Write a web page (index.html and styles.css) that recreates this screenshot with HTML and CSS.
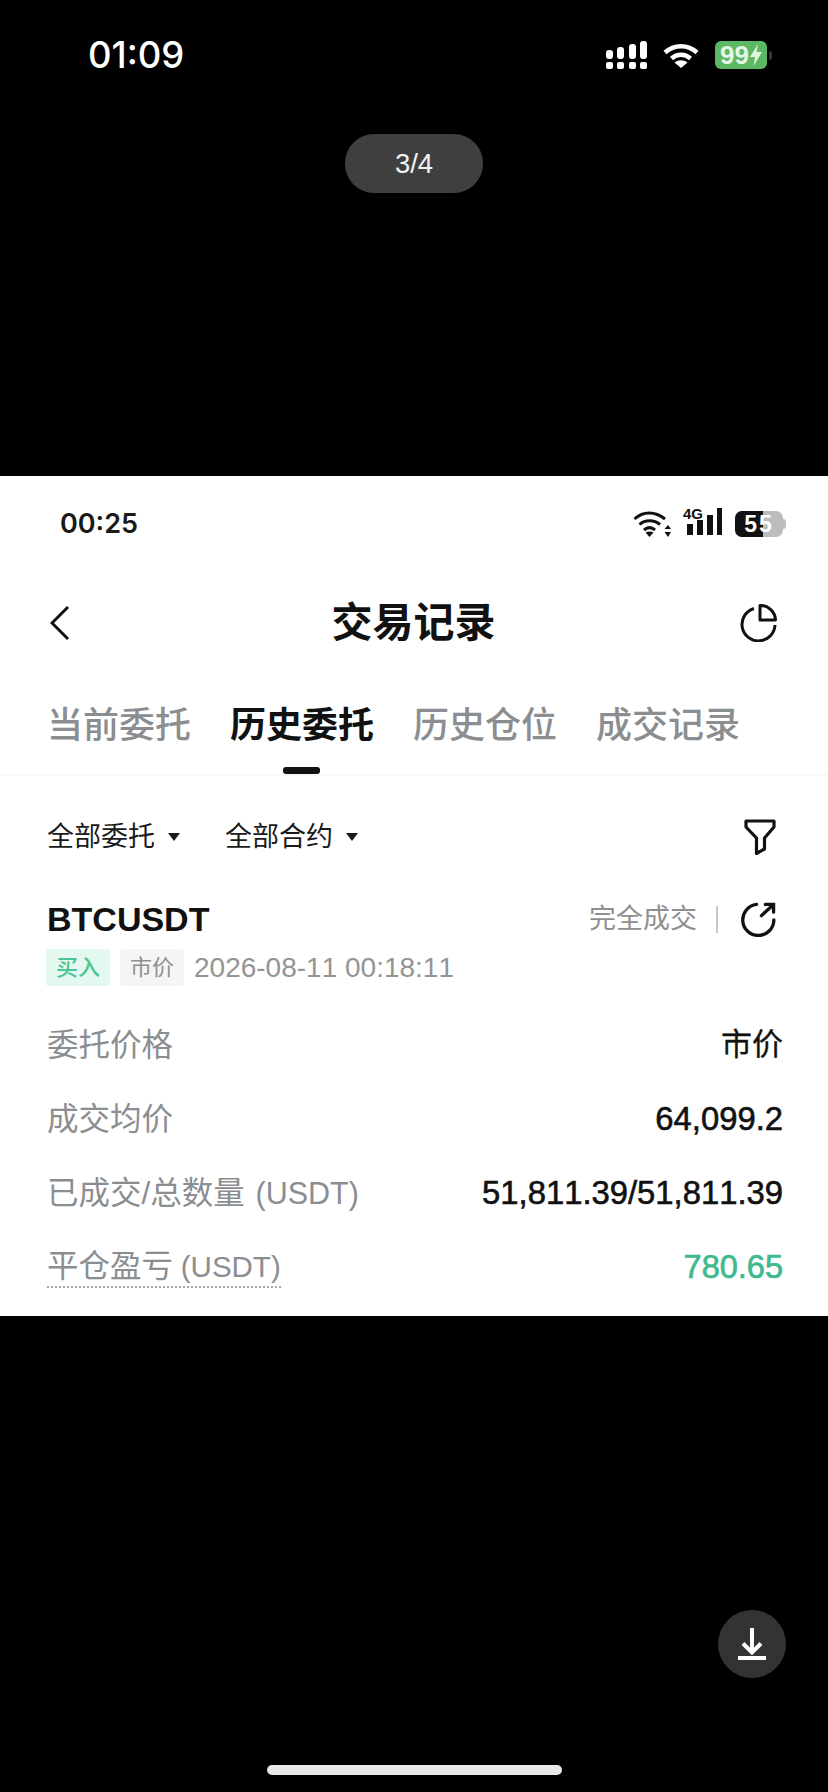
FILE: index.html
```html
<!DOCTYPE html>
<html lang="zh-CN">
<head>
<meta charset="utf-8">
<title>交易记录</title>
<link rel="stylesheet" href="styles.css">
</head>
<body>
<div class="viewer">
  <header class="os-status">
    <span class="os-time">01:09</span>
    <div class="os-icons">
      <svg class="os-signal" viewBox="0 0 41 28" width="41" height="28"><g fill="#fff"><rect x="0" y="9" width="7" height="9" rx="3"/><rect x="11" y="6" width="7" height="12" rx="3"/><rect x="23" y="3" width="7" height="15" rx="3"/><rect x="34" y="0" width="7" height="18" rx="3"/><rect x="0" y="21" width="7" height="7" rx="2"/><rect x="11" y="21" width="7" height="7" rx="2"/><rect x="23" y="21" width="7" height="7" rx="2"/><rect x="34" y="21" width="7" height="7" rx="2"/></g></svg>
      <svg class="os-wifi" viewBox="0 0 36 26" width="36" height="26"><g fill="none" stroke="#fff" stroke-width="4.5"><path d="M2 10.5C11 2 25 2 34 10.5"/><path d="M8.5 16.5C14 11.5 22 11.5 27.5 16.5"/></g><path d="M11.5 20.5C15.5 17.5 20.5 17.5 24.5 20.5L18 26Z" fill="#fff"/></svg>
      <div class="os-battery"><span class="os-battery-text">99</span><svg viewBox="0 0 12 22" width="12" height="22"><path d="M8 0L0 13H5L3.500 22L12 8H6.500Z" fill="#dff3df"/></svg></div>
      <span class="os-battery-cap"></span>
    </div>
  </header>
  <div class="pager">3/4</div>

  <main class="shot">
    <div class="app-status">
      <span class="app-time">00:25</span>
      <div class="app-icons">
        <svg viewBox="0 0 38 27" width="38" height="27"><g fill="none" stroke="#111" stroke-width="3"><path d="M1.500 9C10 1 22 1 32 9"/><path d="M6.500 14.500C12 9.500 21 9.500 27 14.500"/><path d="M11 20C14.500 17 18.500 17 22 20"/></g><path d="M12.500 22.500C15 21 18 21 20.500 22.500L16.500 27Z" fill="#111"/><path d="M35 15L38 19H31.500ZM35 27L31.500 22H38Z" fill="#111"/></svg>
        <div class="app-net"><span class="app-4g">4G</span><svg viewBox="0 0 38 27" width="38" height="27"><g fill="#111"><rect x="3" y="16" width="6" height="11"/><rect x="13" y="12" width="6" height="15"/><rect x="23" y="7" width="6" height="20"/><rect x="33" y="0" width="5" height="27"/></g></svg></div>
        <div class="app-battery"><div class="app-battery-body"><span class="app-battery-fill"></span><span class="app-battery-text">55</span></div><span class="app-battery-cap"></span></div>
      </div>
    </div>

    <nav class="topbar">
      <svg class="back" viewBox="0 0 20 36" width="20" height="36"><path d="M18 2L2 18L18 34" fill="none" stroke="#111" stroke-width="3"/></svg>
      <h1 class="title">交易记录</h1>
      <svg class="pie" viewBox="0 0 37 38" width="37" height="38"><g fill="none" stroke="#111" stroke-width="3" stroke-linejoin="round"><path d="M14 4.500A16.500 16.500 0 1 0 35 21"/><path d="M20 1.500A15 15 0 0 1 35.500 16H20Z"/></g></svg>
    </nav>

    <div class="tabs">
      <span class="tab">当前委托</span>
      <span class="tab tab-active">历史委托</span>
      <span class="tab">历史仓位</span>
      <span class="tab">成交记录</span>
    </div>

    <div class="filters">
      <span class="filter">全部委托<i class="caret"></i></span>
      <span class="filter">全部合约<i class="caret"></i></span>
      <svg class="funnel" viewBox="0 0 32 36" width="32" height="36"><path d="M2 2H30V8L20.500 19V30L12.500 34.500V19L2 8Z" fill="none" stroke="#111" stroke-width="3.200" stroke-linejoin="round"/></svg>
    </div>

    <section class="order">
      <div class="order-head">
        <span class="symbol">BTCUSDT</span>
        <div class="order-state">
          <span class="state-text">完全成交</span>
          <span class="state-sep"></span>
          <svg viewBox="0 0 36 36" width="35" height="35"><g fill="none" stroke="#111" stroke-width="3.400" stroke-linecap="round"><path d="M16 2.500A16 16 0 1 0 33.800 18.500"/><path d="M21 14L33 3"/><path d="M25 2.500H33.500V10.500"/></g></svg>
        </div>
      </div>
      <div class="order-meta">
        <span class="tag tag-buy">买入</span>
        <span class="tag tag-market">市价</span>
        <span class="stamp">2026-08-11 00:18:11</span>
      </div>
      <dl class="rows">
        <div class="row"><dt>委托价格</dt><dd class="value-cjk">市价</dd></div>
        <div class="row"><dt>成交均价</dt><dd>64,099.2</dd></div>
        <div class="row"><dt>已成交/总数量 <span class="unit">(USDT)</span></dt><dd>51,811.39/51,811.39</dd></div>
        <div class="row"><dt class="dotted">平仓盈亏 <span class="unit unit-tight">(USDT)</span></dt><dd class="profit">780.65</dd></div>
      </dl>
    </section>
  </main>

  <button class="save" type="button" aria-label="下载">
    <svg viewBox="0 0 28 32" width="28" height="32"><g fill="none" stroke="#fff" stroke-width="4"><path d="M14 0V24"/><path d="M5 15.500L14 24.500L23 15.500"/><path d="M0 30H28"/></g></svg>
  </button>
  <div class="home"></div>
</div>
</body>
</html>
```
FILE: styles.css
```css
* { box-sizing: border-box; margin: 0; padding: 0; }
html, body { height: 100%; background: #000; }
body { font-family: "Liberation Sans", "Noto Sans CJK SC", sans-serif; font-kerning: none; }
.viewer { display: flex; flex-direction: column; height: 1792px; overflow: hidden; }

.os-status { display: flex; justify-content: space-between; align-items: center; height: 28px; margin-top: 41px; padding: 0 56px 0 88px; }
.os-time { color: #fff; font: 500 36.500px/28px "Inter", "Liberation Sans", sans-serif; }
.os-icons { display: flex; align-items: center; }
.os-wifi { margin-left: 16px; }
.os-battery { display: flex; align-items: center; justify-content: center; gap: 1px; width: 52px; height: 28px; margin-left: 16px; background: #5cb862; border-radius: 6px; }
.os-battery-text { color: #e6f5e6; font: 700 26px/28px "Liberation Sans", sans-serif; }
.os-battery-cap { width: 3px; height: 9px; margin-left: 2px; background: #333; border-radius: 0 3px 3px 0; }

.pager { align-self: center; width: 138px; height: 59px; margin-top: 65px; background: #3f3f3f; border-radius: 29px; color: #f2f2f2; font: 400 27.500px/59px "Liberation Sans", sans-serif; text-align: center; }

.shot { height: 840px; margin-top: 283px; background: #fff; }

.app-status { display: flex; justify-content: space-between; align-items: center; height: 27px; margin-top: 34px; padding: 0 42px 0 60px; }
.app-time { color: #1a1a1a; font: 600 27px/27px "Inter", "Liberation Sans", sans-serif; }
.app-icons { display: flex; align-items: center; gap: 13px; }
.app-net { position: relative; }
.app-4g { position: absolute; left: -1px; top: -2px; color: #111; font: 700 15px/16px "Liberation Sans", sans-serif; }
.app-battery { display: flex; align-items: center; }
.app-battery-body { position: relative; width: 48px; height: 26px; background: #bdbdbd; border-radius: 7px; overflow: hidden; color: #fff; font: 700 23px/26px "Liberation Sans", sans-serif; letter-spacing: 2px; text-align: center; }
.app-battery-fill { position: absolute; left: 0; top: 0; width: 28px; height: 26px; background: #111; }
.app-battery-text { position: relative; }
.app-battery-cap { width: 3px; height: 10px; background: #bdbdbd; border-radius: 0 3px 3px 0; }

.topbar { display: grid; grid-template-columns: 1fr auto 1fr; align-items: center; height: 38px; margin-top: 67px; padding: 0 51px 0 50px; }
.pie { justify-self: end; }
.title { color: #111; font-size: 41px; font-weight: 700; line-height: 38px; }

.tabs { display: flex; gap: 39px; height: 74px; margin-top: 60px; padding-left: 47px; border-bottom: 2px solid #f8f8f8; }
.tab { position: relative; height: 48px; color: #8b8e91; font-size: 36px; font-weight: 500; line-height: 48px; }
.tab-active { color: #111; font-weight: 700; }
.tab-active::after { content: ""; position: absolute; left: 53px; top: 65px; width: 37px; height: 7px; background: #111; border-radius: 3px; }

.filters { display: flex; align-items: center; height: 36px; margin-top: 43px; padding: 0 52px 0 47px; }
.filter { display: flex; align-items: center; margin-right: 45px; color: #1a1a1a; font-size: 27px; line-height: 36px; }
.caret { width: 0; height: 0; margin-left: 13px; border: 6px solid transparent; border-top: 8px solid #1a1a1a; border-bottom: 0; }
.funnel { margin-left: auto; }

.order { padding: 0 47px 0 47px; }
.order-head { display: flex; justify-content: space-between; align-items: center; height: 36px; margin-top: 46px; }
.symbol { color: #111; font: 700 34px/36px "Liberation Sans", sans-serif; }
.order-state { display: flex; align-items: center; margin-right: 5px; }
.state-text { color: #8f8f8f; font-size: 27px; line-height: 36px; }
.state-sep { width: 2px; height: 27px; margin: 0 23px 0 19px; background: #c8c8c8; }

.order-meta { display: flex; align-items: center; gap: 10px; margin-top: 12px; margin-left: -1px; }
.tag { width: 64px; height: 37px; border-radius: 3px; font-size: 22px; line-height: 37px; text-align: center; }
.tag-buy { background: #e3f8ef; color: #4cc495; font-weight: 500; }
.tag-market { background: #f5f5f5; color: #8f8f8f; }
.stamp { color: #949494; font-size: 28px; line-height: 37px; }

.rows { margin-top: 22px; margin-right: -2px; }
.row { display: flex; justify-content: space-between; align-items: center; height: 74px; }
.row dt { color: #8b8e91; font-size: 31.500px; line-height: 40px; }
.unit { margin-left: 2px; font-size: 30.500px; }
.unit-tight { margin-left: -1px; font-size: 29.500px; }
.row dd { color: #111; font-size: 32.800px; line-height: 40px; -webkit-text-stroke: 0.6px #111; }
.row dd.value-cjk { font-size: 31px; -webkit-text-stroke: 0.3px #111; }
.row dt.dotted { border-bottom: 2px dotted #a8a8a8; line-height: 38px; }
.row dd.profit { color: #3fb98f; font-size: 32.500px; -webkit-text-stroke: 0.7px #3fb98f; }

.save { display: flex; align-items: center; justify-content: center; align-self: flex-end; width: 68px; height: 68px; margin: 294px 42px 0 0; background: #333; border: 0; border-radius: 50%; }
.home { align-self: center; width: 295px; height: 10px; margin-top: 87px; background: #e8e8e8; border-radius: 5px; }
```
